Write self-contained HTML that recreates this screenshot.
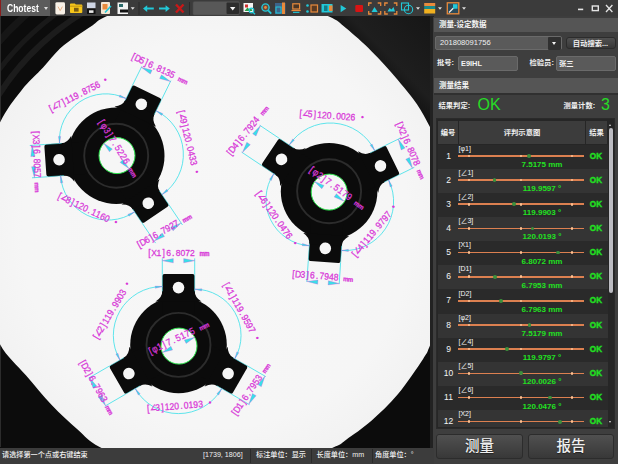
<!DOCTYPE html>
<html lang="zh"><head><meta charset="utf-8"><title>Chotest</title>
<style>
html,body{margin:0;padding:0;background:#2b2b2b;}
body{width:618px;height:464px;overflow:hidden;font-family:"Liberation Sans","Noto Sans CJK SC",sans-serif;}
#app{position:relative;width:618px;height:464px;overflow:hidden;background:#3d3d3d;}
#tb{position:absolute;left:0;top:0;width:618px;height:16px;background:#3b3b3b;}
#tb .brand{position:absolute;left:0;top:0;width:50px;height:16px;background:#5c5c5c;border-left:1.5px solid #8a1c1c;box-sizing:border-box;color:#fff;font-size:10.8px;font-weight:bold;line-height:16px;padding-left:6px;}
#tb .brand b{display:inline-block;transform:scaleX(0.79);transform-origin:0 50%;}
#tb .brand i{position:absolute;left:43px;top:7px;width:0;height:0;border-left:2.5px solid transparent;border-right:2.5px solid transparent;border-top:3px solid #ddd;}
#tb svg{position:absolute;left:0;top:0;}
#view{position:absolute;left:0;top:16px;width:431px;height:432px;background:#0b0b0b;overflow:hidden;}
#view svg{display:block;}
#strip{position:absolute;left:430.3px;top:16px;width:3.7px;height:432px;background:#222;}
#panel{position:absolute;left:433px;top:17px;width:185px;height:447px;background:#3e3e3e;color:#fff;font-size:7.5px;}
#panel .hd{position:absolute;left:1px;width:184px;height:14px;background:#555;line-height:14px;font-size:7.5px;font-weight:bold;color:#f4f4f4;box-sizing:border-box;padding-left:5px;}
#panel .inp{position:absolute;background:#5a5a5a;border:1px solid #6a6a6a;border-radius:2px;box-sizing:border-box;color:#e8e8e8;font-size:7.6px;line-height:12px;padding-left:4px;}
#panel .lbl{position:absolute;font-size:7.3px;color:#f0f0f0;font-weight:bold;white-space:nowrap;line-height:10px;}
#panel .btn{position:absolute;background:linear-gradient(#505050,#383838);border:1px solid #2c2c2c;border-radius:3px;box-sizing:border-box;color:#f0f0f0;text-align:center;}
#tblwrap{position:absolute;left:3px;top:101px;width:179px;height:311px;background:#262626;border:1px solid #2a2a2a;box-sizing:border-box;overflow:hidden;}
#tbl{position:absolute;left:2px;top:2px;width:170px;}
.th{position:absolute;top:0;height:23px;background:#3c3c3c;color:#f0f0f0;font-size:7.3px;font-weight:bold;line-height:23px;text-align:center;}
.row{position:absolute;left:0;width:170px;height:24.15px;}
.row.a{background:#2a2a2a;}
.row.b{background:#343434;}
.row .n{position:absolute;left:0;top:0;width:21px;height:24px;line-height:23px;text-align:center;font-size:8.5px;color:#f4f4f4;}
.row .nm{position:absolute;left:22px;top:-0.8px;font-size:7px;line-height:9px;color:#f4f4f4;white-space:nowrap;}
.row .ln{position:absolute;left:22px;top:10.7px;width:126px;height:1.6px;background:#dc8050;}
.row .tk{position:absolute;top:10.2px;width:2.4px;height:2.6px;border-radius:1.3px;background:#ffc090;}
.row .dot{position:absolute;top:9.6px;width:3.8px;height:3.8px;border-radius:1.9px;background:#3c903c;}
.row .val{position:absolute;left:22px;width:164px;top:15.5px;text-align:center;font-size:8px;line-height:9px;font-weight:bold;color:#22e022;white-space:nowrap;}
.row .ok{position:absolute;left:150px;width:20px;top:0;height:24px;line-height:23px;text-align:center;font-size:8.2px;font-weight:bold;color:#22e022;-webkit-text-stroke:0.35px #22e022;}
#status{position:absolute;left:0;top:448px;width:434px;height:16px;background:#3c3c3c;color:#f0f0f0;}
#status .st{position:absolute;top:0;line-height:14px;font-size:7.15px;font-weight:500;white-space:nowrap;}
#status .sep{position:absolute;top:1px;width:1px;height:14px;background:#2a2a2a;}

</style></head>
<body>
<div id="app">
<div id="tb">
<svg width="618" height="17" viewBox="0 0 618 17">
<rect x="55.4" y="2.2" width="9.6" height="12.2" rx="1.4" fill="#f7f0e6"/><path d="M58,6.6 L60.2,10.6 L62.4,6.6" stroke="#e6b088" stroke-width="1" fill="none"/>
<path d="M70,4.2 q0,-0.8 0.8,-0.8 h4 l1,1.2 h5.7 q0.8,0 0.8,0.8 v6.8 q0,0.8 -0.8,0.8 h-10.7 q-0.8,0 -0.8,-0.8 z" fill="#f6c61a"/><rect x="70" y="5.6" width="12.3" height="1.3" fill="#cfa014"/><rect x="74" y="7.8" width="4.6" height="3.8" fill="#7a5c10"/>
<rect x="87" y="2.5" width="8.5" height="5.5" fill="#cfd6e4"/><rect x="87" y="9" width="8.5" height="5" fill="#111"/><rect x="89" y="10.3" width="4.5" height="2.6" fill="#e8e8e8"/>
<rect x="101" y="2" width="9" height="12" rx="1" fill="#f4e6d2"/><rect x="102.5" y="4" width="5" height="5.5" fill="#e88a3c"/><path d="M105,12.5 L111,6" stroke="#22c8d8" stroke-width="1.6"/>
<rect x="117.5" y="2.5" width="10.5" height="11.5" fill="#f2f2f2"/><rect x="119" y="4" width="4" height="3" fill="#2a6a6a"/><rect x="120" y="9.5" width="8" height="3" fill="#111"/>
<path d="M130.7,7.2 h4 l-2,2.6 z" fill="#ddd"/>
<rect x="138.5" y="2" width="1" height="13" fill="#2a2a2a"/>
<path d="M143,8.6 l4.2,-3.3 v2.3 h6.6 v2 h-6.6 v2.3 z" fill="#22c8d8"/>
<path d="M169.8,8.6 l-4.2,-3.3 v2.3 h-6.6 v2 h6.6 v2.3 z" fill="#22c8d8"/>
<path d="M176,4.5 L183.5,12.5 M183.5,4.5 L176,12.5" stroke="#c81818" stroke-width="2.4"/>
<rect x="189" y="2" width="1" height="13" fill="#2a2a2a"/>
<rect x="193" y="1.5" width="46.5" height="13.5" rx="1.5" fill="#585858" stroke="#4a4a4a" stroke-width="0.6"/><rect x="226.5" y="2.5" width="12.5" height="11.5" rx="1" fill="#2c2c2c"/><path d="M230,7 h5.4 l-2.7,3.4 z" fill="#f4f4f4"/>
<rect x="243.5" y="3" width="9.5" height="9" fill="#f4f4f4"/><rect x="245" y="4.5" width="3" height="3" fill="#d03030"/><path d="M244.5,11 l3,-3.5 l2,2 l1.5,-1.5 l1.5,3 z" fill="#28a048"/><circle cx="251.5" cy="10.5" r="2.3" fill="none" stroke="#22c8d8" stroke-width="1.2"/><path d="M253,12.3 l2,2" stroke="#22c8d8" stroke-width="1.4"/>
<circle cx="265.5" cy="7.5" r="3.6" fill="#6a4a3a" stroke="#22c8d8" stroke-width="1.4"/><circle cx="265.5" cy="7.5" r="1.4" fill="#e88a3c"/><path d="M268.2,10.4 l3,3.2" stroke="#22c8d8" stroke-width="1.8"/>
<rect x="275" y="3" width="10.5" height="11" fill="#3f6f9f" opacity="0.8"/><rect x="276" y="7" width="5" height="6" fill="none" stroke="#22c8d8" stroke-width="1"/><rect x="282" y="2.5" width="3" height="11.5" fill="#e88a3c"/>
<rect x="292.8" y="3.8" width="6.8" height="5.2" fill="#4a3626" stroke="#e88a3c" stroke-width="1.2"/><rect x="291.5" y="9.9" width="9.2" height="1.2" fill="#e88a3c"/><rect x="293" y="11.8" width="6.4" height="1.1" fill="#22c8d8"/>
<circle cx="307.5" cy="5.5" r="1.3" fill="#22c8d8"/><circle cx="307.5" cy="11.5" r="1.3" fill="#22c8d8"/><rect x="311" y="5" width="6.5" height="7" fill="#5a3a22" stroke="#e88a3c" stroke-width="1.2"/>
<rect x="321.5" y="4" width="11" height="8.5" fill="#22c8d8"/><rect x="324" y="5.5" width="3.5" height="5.5" fill="#127a86"/><rect x="329" y="5.5" width="3.5" height="5.5" fill="#e88a3c"/>
<path d="M340.6,4.9 l5.7,3.7 l-5.7,3.7 z" fill="#22c8d8"/>
<rect x="355.3" y="5" width="7.7" height="7" rx="1" fill="#d81414"/>
<path d="M368.7,6 v-3 h3 M377.7,3 h3 v3 M380.7,11 v3 h-3 M371.7,14 h-3 v-3" stroke="#e88a3c" stroke-width="1.3" fill="none"/>
<path d="M384.8,6 v-3 h3 M393.8,3 h3 v3 M396.8,11 v3 h-3 M387.8,14 h-3 v-3" stroke="#e88a3c" stroke-width="1.3" fill="none"/>
<path d="M371.5,12 l3,-5 l3.2,5 z" fill="#22c8d8"/>
<path d="M387.5,11.5 l2,-3.5 l2,1.5 l2,-2.5 l1.5,4.5 z" fill="#22c8d8"/>
<rect x="401.5" y="3" width="7" height="7" fill="none" stroke="#22c8d8" stroke-width="1.1"/><circle cx="408.5" cy="9.5" r="4.2" fill="none" stroke="#22c8d8" stroke-width="1.1"/>
<path d="M416,7.2 h4 l-2,2.6 z" fill="#ddd"/>
<rect x="424.2" y="3" width="11" height="3" fill="#e88a3c"/><rect x="424.2" y="6" width="11" height="3" fill="#1a8a8a"/><rect x="424.2" y="9" width="11" height="4.5" fill="#f0b020"/>
<path d="M438,7.2 h4 l-2,2.6 z" fill="#ddd"/>
<rect x="447.3" y="2.8" width="11.5" height="11" fill="#2a4a5a" stroke="#e88a3c" stroke-width="1.3"/><path d="M449,12.5 l5,-5" stroke="#f0f0f0" stroke-width="1.2"/><rect x="453" y="4.2" width="4.5" height="4.5" fill="#22c8d8"/>
<path d="M462,7.2 h4 l-2,2.6 z" fill="#ddd"/>
<rect x="578" y="8.6" width="5.2" height="1.6" fill="#e4e4e4"/>
<rect x="592.3" y="6" width="6" height="4.6" fill="none" stroke="#e4e4e4" stroke-width="1.4"/>
<path d="M606,5 l6.4,7 M612.4,5 l-6.4,7" stroke="#e4e4e4" stroke-width="1.3"/>
</svg>
<div class="brand"><b>Chotest</b><i></i></div>
</div>
<div id="view">
<svg width="431" height="432" viewBox="0 16 431 432">
<defs><linearGradient id="tr" x1="0" y1="1" x2="1" y2="0"><stop offset="0.45" stop-color="#0e0e0e"/><stop offset="0.62" stop-color="#1e1e1e"/><stop offset="1" stop-color="#161616"/></linearGradient><filter id="soft" x="-5%" y="-5%" width="110%" height="110%"><feGaussianBlur stdDeviation="0.6"/></filter><radialGradient id="fld" gradientUnits="userSpaceOnUse" cx="216.5" cy="233.5" r="243"><stop offset="0" stop-color="#f7f7f7"/><stop offset="0.8" stop-color="#f6f6f6"/><stop offset="1" stop-color="#f2f2f2"/></radialGradient></defs>
<rect x="0" y="16" width="431" height="432" fill="#0c0c0c"/>
<path d="M-37.6,278.3 A258,258 0 0 1 283.3,-15.7" fill="none" stroke="#1c1c1c" stroke-width="6"/>
<path d="M-51.4,280.7 A272,272 0 0 1 286.9,-29.2" fill="none" stroke="#191919" stroke-width="5"/>
<path d="M-69.1,283.9 A290,290 0 0 1 291.6,-46.6" fill="none" stroke="#161616" stroke-width="7"/>
<rect x="0" y="16" width="1" height="431" fill="#2c2c2c"/>
<path d="M325,16 L431,16 L431,125 Z" fill="url(#tr)"/>
<path d="M-25,233.5 C-25,212.2 -20.2,188.5 -16,170 C-11.8,151.5 -6.3,135.8 0,122.5 C6.3,109.2 14.4,99.4 21.6,90.2 C28.8,81 36.7,74.5 43.1,67.5 C49.5,60.5 54.5,53.7 60,48.5 C65.5,43.3 70.8,40.1 76.2,36.2 C81.6,32.4 87.4,28.7 92.4,25.4 C97.4,22.1 96.4,20.6 106,16.5 C115.6,12.4 131.6,5.1 150,1 C168.4,-3.1 194,-8 216.5,-8 C239,-8 266.2,-3.1 285,1 C303.8,5.1 318.9,12 329,16.5 C339.1,21 338.8,22.3 345.9,28.1 C353,33.9 363.1,42.8 371.7,51.4 C380.3,60 389,69.2 397.6,79.8 C406.2,90.3 415,99.7 423.4,114.7 C431.8,129.7 442.2,150.2 448,170 C453.8,189.8 458,211.8 458,233.5 C458,255.2 452.7,281.3 448,300 C443.3,318.7 434.1,335.8 430,345.5 C425.9,355.2 428.8,350.2 423.4,358.4 C418,366.6 406.2,384.2 397.6,394.6 C389,405 380.3,412.9 371.7,420.5 C363.1,428.1 352.1,435.5 345.9,439.9 C339.6,444.3 344.3,442.6 334.2,447 C324.1,451.4 304.6,461.3 285,466 C265.4,470.7 239,475 216.5,475 C194,475 169.5,470.7 150,466 C130.5,461.3 111.7,453.1 99.6,447 C87.5,440.9 85.6,436.6 77.6,429.6 C69.6,422.6 60.3,414.1 51.7,405 C43.1,395.9 34.5,385.4 25.9,375.3 C17.3,365.2 7,357.1 0,344.2 C-7,331.3 -11.8,316.4 -16,298 C-20.2,279.6 -25,254.8 -25,233.5 Z" fill="url(#fld)" filter="url(#soft)"/>
<g transform="translate(116.2,155.7)">
<circle r="48.3" fill="#0b0b0b"/>
<g transform="rotate(-64)">
<rect x="30" y="-16.2" width="41" height="32.4" rx="2.2" fill="#0b0b0b"/>
<path d="M54,-16.2 Q47.5,-16.2 43.5,-23 L43.5,23 Q47.5,16.2 54,16.2 Z" fill="#0b0b0b"/>
<circle cx="57.3" r="5.8" fill="#f6f6f6"/>
</g>
<g transform="rotate(56)">
<rect x="30" y="-16.2" width="41" height="32.4" rx="2.2" fill="#0b0b0b"/>
<path d="M54,-16.2 Q47.5,-16.2 43.5,-23 L43.5,23 Q47.5,16.2 54,16.2 Z" fill="#0b0b0b"/>
<circle cx="57.3" r="5.8" fill="#f6f6f6"/>
</g>
<g transform="rotate(176)">
<rect x="30" y="-16.2" width="41" height="32.4" rx="2.2" fill="#0b0b0b"/>
<path d="M54,-16.2 Q47.5,-16.2 43.5,-23 L43.5,23 Q47.5,16.2 54,16.2 Z" fill="#0b0b0b"/>
<circle cx="57.3" r="5.8" fill="#f6f6f6"/>
</g>
<circle r="32" fill="none" stroke="#2c2c2c" stroke-width="1.9"/>
<circle cx="0.8" cy="-0.1" r="18" fill="#f6f6f6" stroke="#28e048" stroke-width="1"/>
</g>
<g transform="translate(329.1,191.2)">
<circle r="48.3" fill="#0b0b0b"/>
<g transform="rotate(-26.2)">
<rect x="30" y="-16.2" width="41" height="32.4" rx="2.2" fill="#0b0b0b"/>
<path d="M54,-16.2 Q47.5,-16.2 43.5,-23 L43.5,23 Q47.5,16.2 54,16.2 Z" fill="#0b0b0b"/>
<circle cx="57.3" r="5.8" fill="#f6f6f6"/>
</g>
<g transform="rotate(93.8)">
<rect x="30" y="-16.2" width="41" height="32.4" rx="2.2" fill="#0b0b0b"/>
<path d="M54,-16.2 Q47.5,-16.2 43.5,-23 L43.5,23 Q47.5,16.2 54,16.2 Z" fill="#0b0b0b"/>
<circle cx="57.3" r="5.8" fill="#f6f6f6"/>
</g>
<g transform="rotate(213.8)">
<rect x="30" y="-16.2" width="41" height="32.4" rx="2.2" fill="#0b0b0b"/>
<path d="M54,-16.2 Q47.5,-16.2 43.5,-23 L43.5,23 Q47.5,16.2 54,16.2 Z" fill="#0b0b0b"/>
<circle cx="57.3" r="5.8" fill="#f6f6f6"/>
</g>
<circle r="32" fill="none" stroke="#2c2c2c" stroke-width="1.9"/>
<circle cx="0.1" cy="0.9" r="18" fill="#f6f6f6" stroke="#28e048" stroke-width="1"/>
</g>
<g transform="translate(178.5,344.9)">
<circle r="48.3" fill="#0b0b0b"/>
<g transform="rotate(-90)">
<rect x="30" y="-16.2" width="41" height="32.4" rx="2.2" fill="#0b0b0b"/>
<path d="M54,-16.2 Q47.5,-16.2 43.5,-23 L43.5,23 Q47.5,16.2 54,16.2 Z" fill="#0b0b0b"/>
<circle cx="57.3" r="5.8" fill="#f6f6f6"/>
</g>
<g transform="rotate(30)">
<rect x="30" y="-16.2" width="41" height="32.4" rx="2.2" fill="#0b0b0b"/>
<path d="M54,-16.2 Q47.5,-16.2 43.5,-23 L43.5,23 Q47.5,16.2 54,16.2 Z" fill="#0b0b0b"/>
<circle cx="57.3" r="5.8" fill="#f6f6f6"/>
</g>
<g transform="rotate(150)">
<rect x="30" y="-16.2" width="41" height="32.4" rx="2.2" fill="#0b0b0b"/>
<path d="M54,-16.2 Q47.5,-16.2 43.5,-23 L43.5,23 Q47.5,16.2 54,16.2 Z" fill="#0b0b0b"/>
<circle cx="57.3" r="5.8" fill="#f6f6f6"/>
</g>
<circle r="32" fill="none" stroke="#2c2c2c" stroke-width="1.9"/>
<circle cx="0.5" cy="1.2" r="18" fill="#f6f6f6" stroke="#28e048" stroke-width="1"/>
</g>
<g font-family="'Liberation Sans','DejaVu Sans',sans-serif" font-size="9.5" fill="#d838d8" stroke="#d838d8" stroke-width="0.28">
<path d="M154.2,114.7 L161.7,99.4 M125.1,100.5 L132.5,85.2" stroke="#38e0e8" stroke-width="0.9" stroke-opacity="0.6" fill="none"/>
<path d="M161.7,99.4 L170.9,80.6 M132.5,85.2 L141.8,66.4" stroke="#38e0e8" stroke-width="1" stroke-opacity="0.8" fill="none"/>
<path d="M170.4,81.5 L159.6,78.5 L161.5,74.8 Z" fill="#38e0e8"/>
<path d="M141.3,67.3 L152.1,70.2 L150.3,74 Z" fill="#38e0e8"/>
<text transform="translate(159.1,69.1) rotate(25.2) scale(0.9,1)" x="-33.1 -29.9 -23.8 -17.2 -13.2 -6.6 -2.6 2.7 8 13.3 19.9 23.8 29.1" y="2.6">[D5]6.8135 <tspan font-size="6.6" font-weight="bold">mm</tspan></text>
<path d="M132.7,209.1 L142.2,223.2 M159.5,191 L169.1,205.1" stroke="#38e0e8" stroke-width="0.9" stroke-opacity="0.6" fill="none"/>
<path d="M142.2,223.2 L155.6,243.1 M169.1,205.1 L182.5,225" stroke="#38e0e8" stroke-width="1" stroke-opacity="0.8" fill="none"/>
<path d="M154.2,241 L162.2,233.1 L164.5,236.6 Z" fill="#38e0e8"/>
<path d="M181.1,222.9 L173.1,230.8 L170.8,227.3 Z" fill="#38e0e8"/>
<text transform="translate(163.9,231.1) rotate(-29.2) scale(0.9,1)" x="-33.1 -29.9 -23.8 -17.2 -13.2 -6.6 -2.6 2.7 8 13.3 19.9 23.8 29.1" y="2.6">[D6]6.7927 <tspan font-size="6.6" font-weight="bold">mm</tspan></text>
<path d="M61.7,143.3 L44.7,144.5 M64,175.6 L47,176.8" stroke="#38e0e8" stroke-width="0.9" stroke-opacity="0.6" fill="none"/>
<path d="M44.7,144.5 L29.8,145.5 M47,176.8 L32,177.8" stroke="#38e0e8" stroke-width="1" stroke-opacity="0.8" fill="none"/>
<path d="M32.2,145.3 L35,156.2 L30.8,156.5 Z" fill="#38e0e8"/>
<path d="M34.4,177.7 L31.6,166.8 L35.8,166.5 Z" fill="#38e0e8"/>
<text transform="translate(36.4,161) rotate(88) scale(0.9,1)" x="-33.1 -29.7 -23.8 -17.2 -13.2 -6.6 -2.6 2.7 8 13.3 19.9 23.8 29.1" y="2.6">[X3]6.8057 <tspan font-size="6.6" font-weight="bold">mm</tspan></text>
<path d="M59.5,143.4 A46.4,46.4 0 0 1 126.1,98.5" stroke="#38e0e8" stroke-width="1" stroke-opacity="0.8" fill="none"/>
<path d="M59.5,143.4 L58.5,136.4 L60.7,136.4 Z" fill="#38e0e8"/>
<path d="M126.1,98.5 L119.2,97 L119.9,95 Z" fill="#38e0e8"/>
<text transform="translate(74.2,97.3) rotate(-27) scale(0.9,1)" x="-30.5 -27.3 -21.2 -14.6 -10.6 -5.3 0 6.6 10.6 15.9 21.2 26.5 33.1 38.6" y="2.6">[<tspan font-family="'DejaVu Sans Mono',monospace" font-size="11.5" dy="0.6">∠</tspan><tspan dy="-0.6">7]119.8756 <tspan font-size="5.5" font-weight="bold" dy="-1.2" stroke-width="0.8">°</tspan></tspan></text>
<path d="M156.1,110.8 A48.5,48.5 0 0 1 162,194.6" stroke="#38e0e8" stroke-width="1" stroke-opacity="0.8" fill="none"/>
<path d="M156.1,110.8 L162.7,113.5 L161.6,115.4 Z" fill="#38e0e8"/>
<path d="M162,194.6 L166.7,189.3 L168.1,191.1 Z" fill="#38e0e8"/>
<text transform="translate(187,137.4) rotate(76.5) scale(0.9,1)" x="-30.5 -27.3 -21.2 -14.6 -10.6 -5.3 0 6.6 10.6 15.9 21.2 26.5 33.1 38.6" y="2.6">[<tspan font-family="'DejaVu Sans Mono',monospace" font-size="11.5" dy="0.6">∠</tspan><tspan dy="-0.6">9]120.0433 <tspan font-size="5.5" font-weight="bold" dy="-1.2" stroke-width="0.8">°</tspan></tspan></text>
<path d="M134.6,211.9 A47.5,47.5 0 0 1 60.6,175.8" stroke="#38e0e8" stroke-width="1" stroke-opacity="0.8" fill="none"/>
<path d="M134.6,211.9 L129,216.2 L127.9,214.3 Z" fill="#38e0e8"/>
<path d="M60.6,175.8 L62.8,182.6 L60.6,182.9 Z" fill="#38e0e8"/>
<text transform="translate(83.1,207.8) rotate(25.7) scale(0.9,1)" x="-30.5 -27.3 -21.2 -14.6 -10.6 -5.3 0 6.6 10.6 15.9 21.2 26.5 33.1 38.6" y="2.6">[<tspan font-family="'DejaVu Sans Mono',monospace" font-size="11.5" dy="0.6">∠</tspan><tspan dy="-0.6">8]120.1160 <tspan font-size="5.5" font-weight="bold" dy="-1.2" stroke-width="0.8">°</tspan></tspan></text>
<path d="M103.5,143 L112.3,149 L109.5,151.8 Z" fill="#38e0e8"/>
<path d="M128.9,168.4 L120.1,162.4 L122.9,159.6 Z" fill="#38e0e8"/>
<text transform="translate(117.6,148.2) rotate(58) scale(0.9,1)" x="-35.7 -31.7 -25.5 -18.5 -14.1 -7 -2.6 3.1 8.8 14.5 21.6 25.9 31.6" y="2.6">[φ3]7.5226 <tspan font-size="6.6" font-weight="bold">mm</tspan></text>
<path d="M384.3,182.1 L399.5,174.6 M370,153 L385.2,145.5" stroke="#38e0e8" stroke-width="0.9" stroke-opacity="0.6" fill="none"/>
<path d="M399.5,174.6 L414.3,167.3 M385.2,145.5 L400,138.3" stroke="#38e0e8" stroke-width="1" stroke-opacity="0.8" fill="none"/>
<path d="M412.5,168.2 L405.8,159.3 L409.5,157.4 Z" fill="#38e0e8"/>
<path d="M398.2,139.1 L405,148.1 L401.2,149.9 Z" fill="#38e0e8"/>
<text transform="translate(410.3,150) rotate(66.2) scale(0.9,1)" x="-33.1 -29.7 -23.8 -17.2 -13.2 -6.6 -2.6 2.7 8 13.3 19.9 23.8 29.1" y="2.6">[X2]6.8078 <tspan font-size="6.6" font-weight="bold">mm</tspan></text>
<path d="M309.4,243.5 L308.3,260.5 M341.7,245.7 L340.6,262.6" stroke="#38e0e8" stroke-width="0.9" stroke-opacity="0.6" fill="none"/>
<path d="M308.3,260.5 L306.8,281.9 M340.6,262.6 L339.2,284.1" stroke="#38e0e8" stroke-width="1" stroke-opacity="0.8" fill="none"/>
<path d="M306.9,281.4 L318,280.1 L317.7,284.2 Z" fill="#38e0e8"/>
<path d="M339.2,283.6 L328.1,284.9 L328.4,280.7 Z" fill="#38e0e8"/>
<text transform="translate(321.9,276.7) rotate(4.6) scale(0.9,1)" x="-33.1 -29.9 -23.8 -17.2 -13.2 -6.6 -2.6 2.7 8 13.3 19.9 23.8 29.1" y="2.6">[D3]6.7948 <tspan font-size="6.6" font-weight="bold">mm</tspan></text>
<path d="M293.7,148 L279.5,138.5 M275.6,174.9 L261.5,165.4" stroke="#38e0e8" stroke-width="0.9" stroke-opacity="0.6" fill="none"/>
<path d="M279.5,138.5 L259.6,125.2 M261.5,165.4 L241.6,152.1" stroke="#38e0e8" stroke-width="1" stroke-opacity="0.8" fill="none"/>
<path d="M260.4,125.7 L256,136 L252.6,133.7 Z" fill="#38e0e8"/>
<path d="M242.4,152.6 L246.8,142.3 L250.3,144.7 Z" fill="#38e0e8"/>
<text transform="translate(247.6,131.2) rotate(-51.3) scale(0.9,1)" x="-33.1 -29.9 -23.8 -17.2 -13.2 -6.6 -2.6 2.7 8 13.3 19.9 23.8 29.1" y="2.6">[D4]6.7924 <tspan font-size="6.6" font-weight="bold">mm</tspan></text>
<path d="M289.2,145 A49.5,49.5 0 0 1 374.8,150.7" stroke="#38e0e8" stroke-width="1" stroke-opacity="0.8" fill="none"/>
<path d="M289.2,145 L292.7,138.9 L294.4,140.2 Z" fill="#38e0e8"/>
<path d="M374.8,150.7 L370.2,145.3 L372.1,144.1 Z" fill="#38e0e8"/>
<text transform="translate(326.7,115.9) rotate(4.4) scale(0.9,1)" x="-30.5 -27.3 -21.2 -14.6 -10.6 -5.3 0 6.6 10.6 15.9 21.2 26.5 33.1 38.6" y="2.6">[<tspan font-family="'DejaVu Sans Mono',monospace" font-size="11.5" dy="0.6">∠</tspan><tspan dy="-0.6">5]120.0026 <tspan font-size="5.5" font-weight="bold" dy="-1.2" stroke-width="0.8">°</tspan></tspan></text>
<path d="M388.6,180 A49,49 0 0 1 341.4,250.5" stroke="#38e0e8" stroke-width="1" stroke-opacity="0.8" fill="none"/>
<path d="M388.6,180 L392.2,186.1 L390.1,186.9 Z" fill="#38e0e8"/>
<path d="M341.4,250.5 L348.4,249.3 L348.4,251.5 Z" fill="#38e0e8"/>
<text transform="translate(371.7,234.9) rotate(-50) scale(0.9,1)" x="-30.5 -27.3 -21.2 -14.6 -10.6 -5.3 0 6.6 10.6 15.9 21.2 26.5 33.1 38.6" y="2.6">[<tspan font-family="'DejaVu Sans Mono',monospace" font-size="11.5" dy="0.6">∠</tspan><tspan dy="-0.6">4]119.9797 <tspan font-size="5.5" font-weight="bold" dy="-1.2" stroke-width="0.8">°</tspan></tspan></text>
<path d="M309.2,245.7 A46.3,46.3 0 0 1 273.8,173.7" stroke="#38e0e8" stroke-width="1" stroke-opacity="0.8" fill="none"/>
<path d="M309.2,245.7 L302.2,245.7 L302.5,243.5 Z" fill="#38e0e8"/>
<path d="M273.8,173.7 L271.4,180.4 L269.5,179.3 Z" fill="#38e0e8"/>
<text transform="translate(273.4,214.8) rotate(54.9) scale(0.9,1)" x="-30.5 -27.3 -21.2 -14.6 -10.6 -5.3 0 6.6 10.6 15.9 21.2 26.5 33.1 38.6" y="2.6">[<tspan font-family="'DejaVu Sans Mono',monospace" font-size="11.5" dy="0.6">∠</tspan><tspan dy="-0.6">6]120.0476 <tspan font-size="5.5" font-weight="bold" dy="-1.2" stroke-width="0.8">°</tspan></tspan></text>
<path d="M314.1,181.2 L324,185.4 L321.8,188.7 Z" fill="#38e0e8"/>
<path d="M344.1,201.2 L334.2,197 L336.4,193.7 Z" fill="#38e0e8"/>
<text transform="translate(336.3,188.1) rotate(36.2) scale(0.9,1)" x="-35.7 -31.7 -25.5 -18.5 -14.1 -7 -2.6 3.1 8.8 14.5 21.6 25.9 31.6" y="2.6">[φ2]7.5179 <tspan font-size="6.6" font-weight="bold">mm</tspan></text>
<path d="M194.7,291.4 L194.7,274.4 M162.3,291.4 L162.3,274.4" stroke="#38e0e8" stroke-width="0.9" stroke-opacity="0.6" fill="none"/>
<path d="M194.7,274.4 L194.7,258.4 M162.3,274.4 L162.3,258.4" stroke="#38e0e8" stroke-width="1" stroke-opacity="0.8" fill="none"/>
<path d="M194.7,260.7 L183.7,262.8 L183.7,258.6 Z" fill="#38e0e8"/>
<path d="M162.3,260.7 L173.3,258.6 L173.3,262.8 Z" fill="#38e0e8"/>
<text transform="translate(178,253.1) rotate(0) scale(0.9,1)" x="-33.1 -29.7 -23.8 -17.2 -13.2 -6.6 -2.6 2.7 8 13.3 19.9 23.8 29.1" y="2.6">[X1]6.8072 <tspan font-size="6.6" font-weight="bold">mm</tspan></text>
<path d="M216.7,385.7 L231.5,394.2 M232.9,357.6 L247.7,366.1" stroke="#38e0e8" stroke-width="0.9" stroke-opacity="0.6" fill="none"/>
<path d="M231.5,394.2 L249.6,404.7 M247.7,366.1 L265.8,376.6" stroke="#38e0e8" stroke-width="1" stroke-opacity="0.8" fill="none"/>
<path d="M248.8,404.2 L252.5,393.6 L256.1,395.7 Z" fill="#38e0e8"/>
<path d="M265,376.1 L261.3,386.7 L257.7,384.6 Z" fill="#38e0e8"/>
<text transform="translate(251,390) rotate(-55.7) scale(0.9,1)" x="-33.1 -29.9 -23.8 -17.2 -13.2 -6.6 -2.6 2.7 8 13.3 19.9 23.8 29.1" y="2.6">[D1]6.7953 <tspan font-size="6.6" font-weight="bold">mm</tspan></text>
<path d="M124.1,357.6 L109.3,366.1 M140.3,385.7 L125.5,394.2" stroke="#38e0e8" stroke-width="0.9" stroke-opacity="0.6" fill="none"/>
<path d="M109.3,366.1 L88.6,378.1 M125.5,394.2 L104.8,406.2" stroke="#38e0e8" stroke-width="1" stroke-opacity="0.8" fill="none"/>
<path d="M89.4,377.6 L96.7,386.1 L93.1,388.2 Z" fill="#38e0e8"/>
<path d="M105.6,405.7 L98.3,397.2 L101.9,395.1 Z" fill="#38e0e8"/>
<text transform="translate(96.3,387) rotate(60.3) scale(0.9,1)" x="-33.1 -29.9 -23.8 -17.2 -13.2 -6.6 -2.6 2.7 8 13.3 19.9 23.8 29.1" y="2.6">[D2]6.7963 <tspan font-size="6.6" font-weight="bold">mm</tspan></text>
<path d="M119.9,360 A49,49 0 0 1 162.3,286.5" stroke="#38e0e8" stroke-width="1" stroke-opacity="0.8" fill="none"/>
<path d="M119.9,360 L115.9,354.2 L117.9,353.2 Z" fill="#38e0e8"/>
<path d="M162.3,286.5 L155.4,288.3 L155.2,286.1 Z" fill="#38e0e8"/>
<text transform="translate(109.8,315) rotate(-59) scale(0.9,1)" x="-30.5 -27.3 -21.2 -14.6 -10.6 -5.3 0 6.6 10.6 15.9 21.2 26.5 33.1 38.6" y="2.6">[<tspan font-family="'DejaVu Sans Mono',monospace" font-size="11.5" dy="0.6">∠</tspan><tspan dy="-0.6">2]119.9903 <tspan font-size="5.5" font-weight="bold" dy="-1.2" stroke-width="0.8">°</tspan></tspan></text>
<path d="M194.7,289.2 A46.3,46.3 0 0 1 234.8,358.7" stroke="#38e0e8" stroke-width="1" stroke-opacity="0.8" fill="none"/>
<path d="M194.7,289.2 L201.8,288.8 L201.6,291 Z" fill="#38e0e8"/>
<path d="M234.8,358.7 L236.8,351.9 L238.8,352.8 Z" fill="#38e0e8"/>
<text transform="translate(238.6,307.4) rotate(60.8) scale(0.9,1)" x="-30.5 -27.3 -21.2 -14.6 -10.6 -5.3 0 6.6 10.6 15.9 21.2 26.5 33.1 38.6" y="2.6">[<tspan font-family="'DejaVu Sans Mono',monospace" font-size="11.5" dy="0.6">∠</tspan><tspan dy="-0.6">1]119.9597 <tspan font-size="5.5" font-weight="bold" dy="-1.2" stroke-width="0.8">°</tspan></tspan></text>
<path d="M221.8,388.6 A50,50 0 0 1 135.2,388.6" stroke="#38e0e8" stroke-width="1" stroke-opacity="0.8" fill="none"/>
<path d="M221.8,388.6 L218.7,395 L216.9,393.7 Z" fill="#38e0e8"/>
<path d="M135.2,388.6 L140.1,393.7 L138.3,395 Z" fill="#38e0e8"/>
<text transform="translate(174.4,406.9) rotate(-4.6) scale(0.9,1)" x="-30.5 -27.3 -21.2 -14.6 -10.6 -5.3 0 6.6 10.6 15.9 21.2 26.5 33.1 38.6" y="2.6">[<tspan font-family="'DejaVu Sans Mono',monospace" font-size="11.5" dy="0.6">∠</tspan><tspan dy="-0.6">3]120.0193 <tspan font-size="5.5" font-weight="bold" dy="-1.2" stroke-width="0.8">°</tspan></tspan></text>
<path d="M162.2,352.6 L170.9,346.3 L172.6,349.9 Z" fill="#38e0e8"/>
<path d="M194.8,337.2 L186.1,343.5 L184.4,339.9 Z" fill="#38e0e8"/>
<text transform="translate(178.3,338.4) rotate(-25.3) scale(0.9,1)" x="-35.7 -31.7 -25.5 -18.5 -14.1 -7 -2.6 3.1 8.8 14.5 21.6 25.9 31.6" y="2.6">[φ1]7.5175 <tspan font-size="6.6" font-weight="bold">mm</tspan></text>
</g>
</svg>
</div>
<div id="strip"></div>
<div id="panel">
<div class="hd" style="top:0.5px;height:14.5px;line-height:14.5px">测量-设定数据</div>
<div class="inp" style="left:2px;top:19px;width:126.5px;height:14px;color:#f0f0f0">201808091756</div>
<div style="position:absolute;left:115px;top:19.5px;width:13px;height:13px;background:#303030;border-radius:1px"><i style="position:absolute;left:3.9px;top:5px;width:0;height:0;border-left:2.6px solid transparent;border-right:2.6px solid transparent;border-top:3.4px solid #f4f4f4"></i></div>
<div class="btn" style="left:132.5px;top:19.5px;width:50px;height:12.5px;font-size:7.3px;line-height:11px;font-weight:bold">自动搜索...</div>
<div class="lbl" style="left:4px;top:40.8px">批号:</div>
<div class="inp" style="left:24.5px;top:38.8px;width:60px;height:15px;line-height:13px;font-weight:bold;color:#f4f4f4;padding-left:2.5px;font-size:7.4px">E9IHL</div>
<div class="lbl" style="left:96.5px;top:40.8px">检验员:</div>
<div class="inp" style="left:122.5px;top:38.8px;width:60px;height:15px;line-height:13px;font-weight:bold;color:#f4f4f4;font-size:7.3px;padding-left:2.5px">张三</div>
<div class="hd" style="top:61px;height:15px;line-height:15px">测量结果</div><div style="position:absolute;left:1px;top:76px;width:184px;height:1.5px;background:#303030"></div>
<div class="lbl" style="left:5.5px;top:83.5px">结果判定:</div>
<div style="position:absolute;left:44.5px;top:78px;font-size:16px;line-height:20px;color:#26dc26">OK</div>
<div class="lbl" style="left:130.5px;top:83.5px">测量计数:</div>
<div style="position:absolute;left:168px;top:78px;font-size:16px;line-height:20px;color:#26dc26">3</div>
<div id="tblwrap">
<div id="tbl" style="left:1px;top:1.5px;height:306.5px;overflow:hidden">
<div class="th" style="left:0;width:20px">编号</div>
<div class="th" style="left:21px;width:126px">评判示意图</div>
<div class="th" style="left:148px;width:21px">结果</div>
<div class="row a" style="top:24.00px">
<div class="n">1</div><div class="nm" style="left:20.5px">[φ1]</div>
<div class="ln" style="left:20.3px"></div>
<div class="tk" style="left:29.8px"></div>
<div class="tk" style="left:81.5px"></div>
<div class="tk" style="left:132.6px"></div>
<div class="dot" style="left:89.0px"></div>
<div class="val" style="left:42px;width:124px">7.5175 mm</div>
<div class="ok" style="left:147px;width:22px">OK</div>
</div>
<div class="row b" style="top:48.15px">
<div class="n">2</div><div class="nm" style="left:20.5px">[∠1]</div>
<div class="ln" style="left:20.3px"></div>
<div class="tk" style="left:29.8px"></div>
<div class="tk" style="left:81.5px"></div>
<div class="tk" style="left:132.6px"></div>
<div class="dot" style="left:54.6px"></div>
<div class="val" style="left:42px;width:124px">119.9597 °</div>
<div class="ok" style="left:147px;width:22px">OK</div>
</div>
<div class="row a" style="top:72.30px">
<div class="n">3</div><div class="nm" style="left:20.5px">[∠2]</div>
<div class="ln" style="left:20.3px"></div>
<div class="tk" style="left:29.8px"></div>
<div class="tk" style="left:81.5px"></div>
<div class="tk" style="left:132.6px"></div>
<div class="dot" style="left:73.8px"></div>
<div class="val" style="left:42px;width:124px">119.9903 °</div>
<div class="ok" style="left:147px;width:22px">OK</div>
</div>
<div class="row b" style="top:96.45px">
<div class="n">4</div><div class="nm" style="left:20.5px">[∠3]</div>
<div class="ln" style="left:20.3px"></div>
<div class="tk" style="left:29.8px"></div>
<div class="tk" style="left:81.5px"></div>
<div class="tk" style="left:132.6px"></div>
<div class="dot" style="left:92.5px"></div>
<div class="val" style="left:42px;width:124px">120.0193 °</div>
<div class="ok" style="left:147px;width:22px">OK</div>
</div>
<div class="row a" style="top:120.60px">
<div class="n">5</div><div class="nm" style="left:20.5px">[X1]</div>
<div class="ln" style="left:20.3px"></div>
<div class="tk" style="left:29.8px"></div>
<div class="tk" style="left:81.5px"></div>
<div class="tk" style="left:132.6px"></div>
<div class="dot" style="left:117.9px"></div>
<div class="val" style="left:42px;width:124px">6.8072 mm</div>
<div class="ok" style="left:147px;width:22px">OK</div>
</div>
<div class="row b" style="top:144.75px">
<div class="n">6</div><div class="nm" style="left:20.5px">[D1]</div>
<div class="ln" style="left:20.3px"></div>
<div class="tk" style="left:29.8px"></div>
<div class="tk" style="left:81.5px"></div>
<div class="tk" style="left:132.6px"></div>
<div class="dot" style="left:55.4px"></div>
<div class="val" style="left:42px;width:124px">6.7953 mm</div>
<div class="ok" style="left:147px;width:22px">OK</div>
</div>
<div class="row a" style="top:168.90px">
<div class="n">7</div><div class="nm" style="left:20.5px">[D2]</div>
<div class="ln" style="left:20.3px"></div>
<div class="tk" style="left:29.8px"></div>
<div class="tk" style="left:81.5px"></div>
<div class="tk" style="left:132.6px"></div>
<div class="dot" style="left:61.1px"></div>
<div class="val" style="left:42px;width:124px">6.7963 mm</div>
<div class="ok" style="left:147px;width:22px">OK</div>
</div>
<div class="row b" style="top:193.05px">
<div class="n">8</div><div class="nm" style="left:20.5px">[φ2]</div>
<div class="ln" style="left:20.3px"></div>
<div class="tk" style="left:29.8px"></div>
<div class="tk" style="left:81.5px"></div>
<div class="tk" style="left:132.6px"></div>
<div class="dot" style="left:89.5px"></div>
<div class="val" style="left:42px;width:124px">7.5179 mm</div>
<div class="ok" style="left:147px;width:22px">OK</div>
</div>
<div class="row a" style="top:217.20px">
<div class="n">9</div><div class="nm" style="left:20.5px">[∠4]</div>
<div class="ln" style="left:20.3px"></div>
<div class="tk" style="left:29.8px"></div>
<div class="tk" style="left:81.5px"></div>
<div class="tk" style="left:132.6px"></div>
<div class="dot" style="left:67.4px"></div>
<div class="val" style="left:42px;width:124px">119.9797 °</div>
<div class="ok" style="left:147px;width:22px">OK</div>
</div>
<div class="row b" style="top:241.35px">
<div class="n">10</div><div class="nm" style="left:20.5px">[∠5]</div>
<div class="ln" style="left:20.3px"></div>
<div class="tk" style="left:29.8px"></div>
<div class="tk" style="left:81.5px"></div>
<div class="tk" style="left:132.6px"></div>
<div class="dot" style="left:81.1px"></div>
<div class="val" style="left:42px;width:124px">120.0026 °</div>
<div class="ok" style="left:147px;width:22px">OK</div>
</div>
<div class="row a" style="top:265.50px">
<div class="n">11</div><div class="nm" style="left:20.5px">[∠6]</div>
<div class="ln" style="left:20.3px"></div>
<div class="tk" style="left:29.8px"></div>
<div class="tk" style="left:81.5px"></div>
<div class="tk" style="left:132.6px"></div>
<div class="dot" style="left:110.4px"></div>
<div class="val" style="left:42px;width:124px">120.0476 °</div>
<div class="ok" style="left:147px;width:22px">OK</div>
</div>
<div class="row b" style="top:289.65px">
<div class="n">12</div><div class="nm" style="left:20.5px">[X2]</div>
<div class="ln" style="left:20.3px"></div>
<div class="tk" style="left:29.8px"></div>
<div class="tk" style="left:81.5px"></div>
<div class="tk" style="left:132.6px"></div>
<div class="dot" style="left:120.4px"></div>
<div class="val" style="left:42px;width:124px">6.8078 mm</div>
<div class="ok" style="left:147px;width:22px">OK</div>
</div>
</div>
<div style="position:absolute;left:171.6px;top:9px;width:4.1px;height:165px;border-radius:2px;background:#bcbcc2"></div>
<i style="position:absolute;left:172px;top:4.5px;width:0;height:0;border-left:1.8px solid transparent;border-right:1.8px solid transparent;border-bottom:2.4px solid #ddd"></i>
<i style="position:absolute;left:172px;top:301.5px;width:0;height:0;border-left:1.8px solid transparent;border-right:1.8px solid transparent;border-top:2.4px solid #ddd"></i>
</div>
<div class="btn" style="left:3px;top:417px;width:87px;height:25px;font-size:14.5px;line-height:22px;font-weight:500;text-shadow:0 1px 1px #222">测量</div>
<div class="btn" style="left:95px;top:417px;width:86px;height:25px;font-size:14.5px;line-height:22px;font-weight:500;text-shadow:0 1px 1px #222">报告</div>
</div>
<div id="status">
<span class="st" style="left:2px">请选择第一个点或右键结束</span>
<span class="st" style="left:203px">[1739, 1806]</span>
<span class="sep" style="left:250px"></span>
<span class="st" style="left:256px">标注单位：显示</span>
<span class="sep" style="left:311px"></span>
<span class="st" style="left:316.5px">长度单位：mm</span>
<span class="sep" style="left:371.5px"></span>
<span class="st" style="left:375px">角度单位：°</span>
</div>
</div>
</body></html>
